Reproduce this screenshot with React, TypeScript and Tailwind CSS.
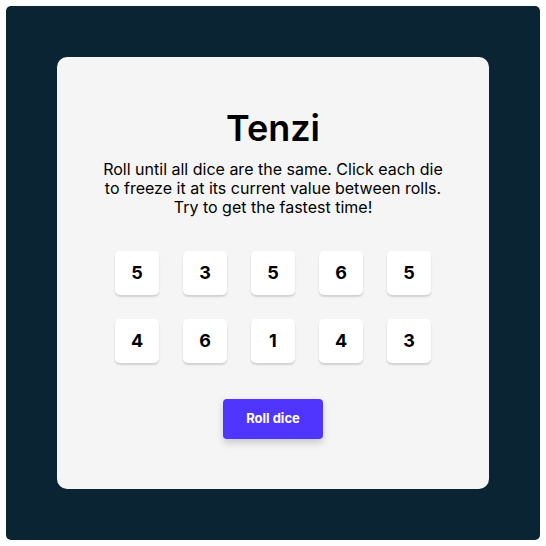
const dice = [5, 3, 5, 6, 5, 4, 6, 1, 4, 3];

export default function App() {
  return (
    <div className="h-[546px] w-[546px] bg-white p-[6px] font-['Inter',sans-serif]">
      <main className="flex h-full w-full items-center justify-center rounded-[5px] bg-[#0B2434]">
        <div className="flex h-[432px] w-[432px] flex-col items-center justify-center rounded-[10px] bg-[#F5F5F5] text-black">
          <h1 className="text-[36px] font-semibold leading-[1.21]">Tenzi</h1>
          <p className="mt-[9px] w-[345px] text-center text-[16px] leading-[19px]">
            Roll until all dice are the same. Click each die to freeze it at its current value between rolls.
            Try to get the fastest time!
          </p>
          <div className="mt-[34px] grid grid-cols-5 gap-6">
            {dice.map((d, i) => (
              <button
                key={i}
                className="flex h-11 w-11 items-center justify-center rounded-[5px] bg-white text-[18px] font-bold shadow-[0_2px_2px_rgba(0,0,0,0.15)]"
              >
                {d}
              </button>
            ))}
          </div>
          <button className="mt-9 h-10 w-[100px] rounded-[4px] bg-[#5035FF] text-[13px] font-bold text-white shadow-[0_3.2px_7.68px_rgba(0,0,0,0.18)]">
            Roll dice
          </button>
        </div>
      </main>
    </div>
  );
}
